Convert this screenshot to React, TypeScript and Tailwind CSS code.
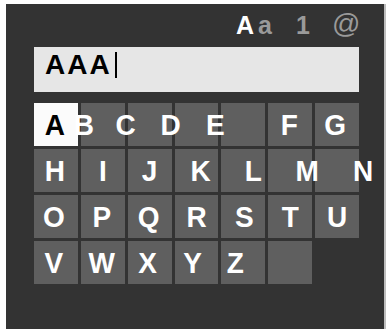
import React from "react";

type Key = { ch: string; shift?: string; active?: boolean };

// letters in the picture don't sit centred in their tiles, so each one carries its own nudge
const rows: Key[][] = [
  [
    { ch: "A", shift: "-translate-x-[1px]", active: true },
    { ch: "B", shift: "-translate-x-[19px]" },
    { ch: "C", shift: "-translate-x-[24px]" },
    { ch: "D", shift: "-translate-x-[26px]" },
    { ch: "E", shift: "-translate-x-[28px]" },
    { ch: "F", shift: "-translate-x-[1px]" },
    { ch: "G", shift: "-translate-x-[2px]" },
  ],
  [
    { ch: "H", shift: "-translate-x-[1px]" },
    { ch: "I" },
    { ch: "J" },
    { ch: "K", shift: "translate-x-[4px]" },
    { ch: "L", shift: "translate-x-[10px]" },
    { ch: "M", shift: "translate-x-[17px]" },
    { ch: "N", shift: "translate-x-[26px]" },
  ],
  [
    { ch: "O", shift: "-translate-x-[2px]" },
    { ch: "P", shift: "-translate-x-[1px]" },
    { ch: "Q", shift: "-translate-x-[1px]" },
    { ch: "R" },
    { ch: "S", shift: "translate-x-[1px]" },
    { ch: "T" },
    { ch: "U" },
  ],
  [
    { ch: "V", shift: "-translate-x-[2px]" },
    { ch: "W", shift: "-translate-x-[1px]" },
    { ch: "X", shift: "-translate-x-[2px]" },
    { ch: "Y", shift: "-translate-x-[4px]" },
    { ch: "Z", shift: "-translate-x-[8px]" },
    { ch: "" },
  ],
];

function Tile({ k }: { k: Key }) {
  return (
    <div
      className={`flex h-[43px] items-center justify-center ${
        k.active ? "bg-[#fbfbfb] text-black" : "bg-[#5f5f5f] text-white"
      }`}
    >
      <span className={`text-[28px] font-bold leading-none scale-y-[1.06] ${k.shift ?? ""}`}>{k.ch}</span>
    </div>
  );
}

export default function App() {
  return (
    <div className="h-[332px] w-[389px] bg-white pl-[6px] pt-[4px] font-['Liberation_Sans',Arial,sans-serif]">
      <div className="h-[325px] w-[380px] border-r-[2px] border-[#bdbdbd] bg-[#333333] pl-[28px] pt-[8px]">
        <div className="flex h-[26px] items-end text-[25px] leading-none">
          <span className="ml-[202px] font-bold text-white">A</span>
          <span className="ml-[4px] font-bold text-[#9a9a9a]">a</span>
          <span className="ml-[24px] font-bold text-[#9a9a9a]">1</span>
          <span className="ml-[22px] text-[28px] text-[#9a9a9a]">@</span>
        </div>

        <div className="mt-[9px] flex h-[45px] w-[325px] items-start bg-[#e6e6e6] pl-[11px] pt-[4px]">
          <span className="text-[28px] font-bold leading-none tracking-[2px] text-black">AAA</span>
          <span className="ml-[3px] mt-[1px] h-[26px] w-[2px] bg-black" />
        </div>

        <div className="mt-[11px] flex w-[325px] flex-col gap-[3px]">
          {rows.map((row, i) => (
            <div key={i} className="grid grid-cols-7 gap-[3px]">
              {row.map((k, j) => (
                <Tile key={j} k={k} />
              ))}
            </div>
          ))}
        </div>
      </div>
    </div>
  );
}
